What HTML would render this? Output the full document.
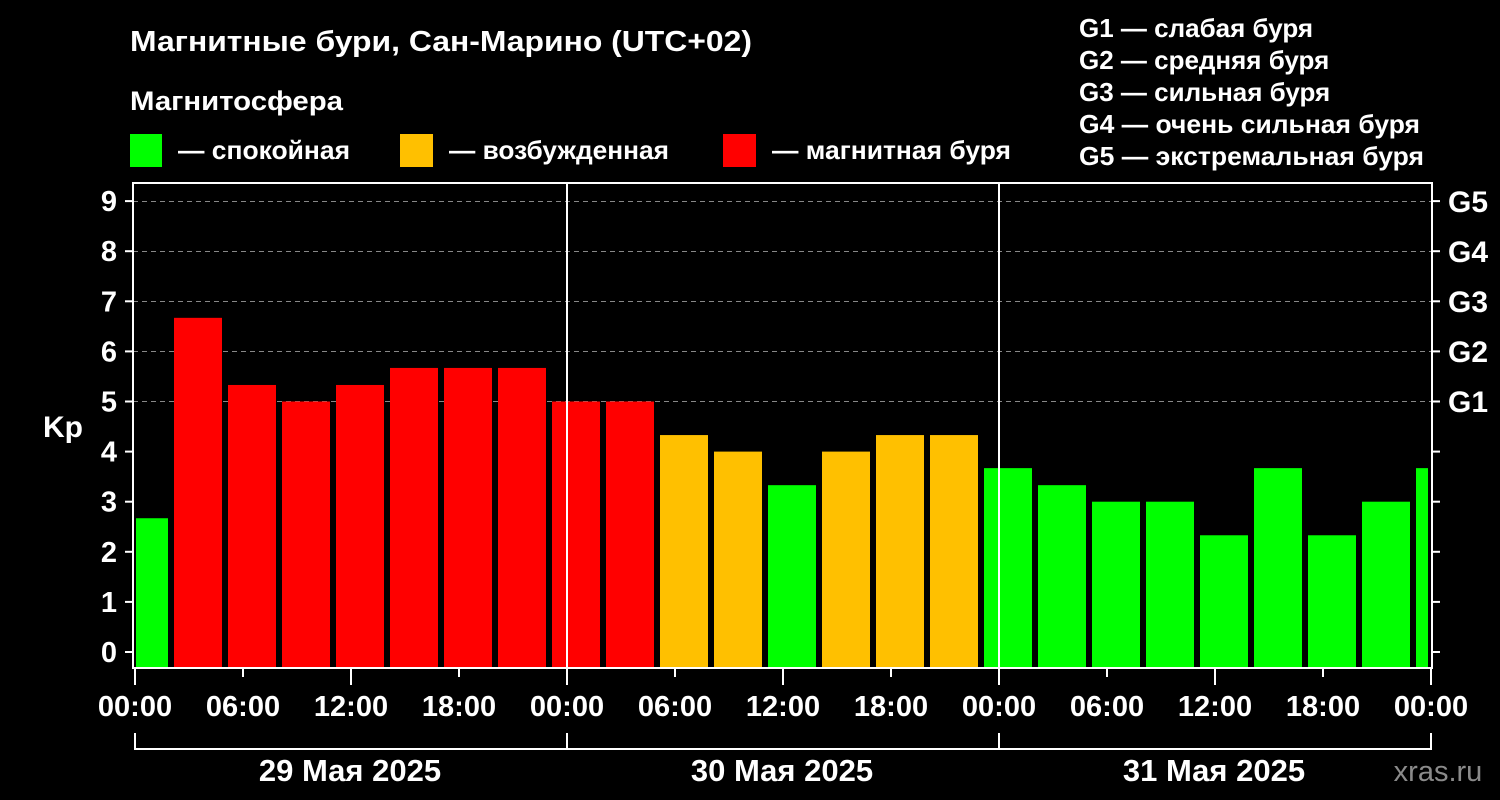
<!DOCTYPE html><html><head><meta charset="utf-8"><style>body{margin:0;background:#000}svg{display:block}text{font-family:"Liberation Sans",sans-serif;font-weight:bold;fill:#fff}</style></head><body>
<svg width="1500" height="800" xmlns="http://www.w3.org/2000/svg">
<rect width="1500" height="800" fill="#000"/>
<text x="130" y="51" font-size="29" textLength="622" lengthAdjust="spacingAndGlyphs">Магнитные бури, Сан-Марино (UTC+02)</text>
<text x="130" y="110" font-size="27" textLength="213" lengthAdjust="spacingAndGlyphs">Магнитосфера</text>
<rect x="130" y="134" width="32" height="33" fill="#00ff00"/><text x="178" y="159" font-size="26" textLength="172" lengthAdjust="spacingAndGlyphs">— спокойная</text>
<rect x="400" y="134" width="33" height="33" fill="#ffc000"/><text x="449" y="159" font-size="26" textLength="220" lengthAdjust="spacingAndGlyphs">— возбужденная</text>
<rect x="723" y="134" width="33" height="33" fill="#ff0000"/><text x="772" y="159" font-size="26" textLength="239" lengthAdjust="spacingAndGlyphs">— магнитная буря</text>
<g font-size="26"><text x="1079" y="37">G1 — слабая буря</text><text x="1079" y="69">G2 — средняя буря</text><text x="1079" y="101">G3 — сильная буря</text><text x="1079" y="133" textLength="341" lengthAdjust="spacingAndGlyphs">G4 — очень сильная буря</text><text x="1079" y="165" textLength="345" lengthAdjust="spacingAndGlyphs">G5 — экстремальная буря</text></g>
<g stroke="#888" stroke-dasharray="5,4" stroke-width="1"><line x1="133" x2="1432" y1="201.5" y2="201.5"/><line x1="133" x2="1432" y1="251.5" y2="251.5"/><line x1="133" x2="1432" y1="301.5" y2="301.5"/><line x1="133" x2="1432" y1="351.5" y2="351.5"/><line x1="133" x2="1432" y1="401.5" y2="401.5"/></g>
<g id="bars"></g>
<g stroke="#fff" stroke-width="2" fill="none">
<rect x="133" y="183" width="1299" height="485"/>
<line x1="567" y1="183" x2="567" y2="668"/><line x1="999" y1="183" x2="999" y2="668"/>
</g>
<g id="ticks" stroke="#fff" stroke-width="2"></g>
<g font-size="29" text-anchor="end" id="ylab"></g>
<text x="43" y="437" font-size="30">Kp</text>
<g font-size="30"><text x="1448" y="212">G5</text><text x="1448" y="262">G4</text><text x="1448" y="312">G3</text><text x="1448" y="362">G2</text><text x="1448" y="412">G1</text></g>
<g font-size="29" text-anchor="middle" id="xlab"></g>
<g stroke="#fff" stroke-width="2" fill="none"><path d="M135 733V749H1431V733M567 733V749M999 733V749"/></g>
<g font-size="31" text-anchor="middle"><text x="350" y="781">29 Мая 2025</text><text x="782" y="781">30 Мая 2025</text><text x="1214" y="781">31 Мая 2025</text></g>
<text x="1438" y="781" font-size="29" style="fill:#8a8a8a;font-weight:normal" text-anchor="middle">xras.ru</text>
</svg>
<script>
var ns="http://www.w3.org/2000/svg";function el(p,t,a,tx){var e=document.createElementNS(ns,t);for(var k in a)e.setAttribute(k,a[k]);if(tx)e.textContent=tx;document.getElementById(p).appendChild(e);}
var v=[6.67,5.33,5,5.33,5.67,5.67,5.67,5,5,4.33,4,3.33,4,4.33,4.33,3.67,3.33,3,3,2.33,3.67,2.33,3,3.67];
function col(k){return k>=5?"#ff0000":k>=4?"#ffc000":"#00ff00";}
function y(k){return 652-50.1*k;}
el("bars","rect",{x:136,y:y(2.67),width:32,height:667-y(2.67),fill:col(2.67)});
v.forEach(function(k,i){var x=174+i*54,w=i==23?12:48;el("bars","rect",{x:x,y:y(k),width:w,height:667-y(k),fill:col(k)});});
for(var k=0;k<=9;k++){var yy=652-50.1*k;el("ticks","line",{x1:125,x2:133,y1:yy,y2:yy});el("ticks","line",{x1:1432,x2:1440,y1:yy,y2:yy});el("ylab","text",{x:117,y:yy+10},""+k);}
var lb=["00:00","06:00","12:00","18:00"];
for(var i=0;i<=12;i++){var x=135+i*108;el("ticks","line",{x1:x,x2:x,y1:668,y2:i%2?677:685});el("xlab","text",{x:x,y:716},lb[i%4]);}
</script>
</body></html>
